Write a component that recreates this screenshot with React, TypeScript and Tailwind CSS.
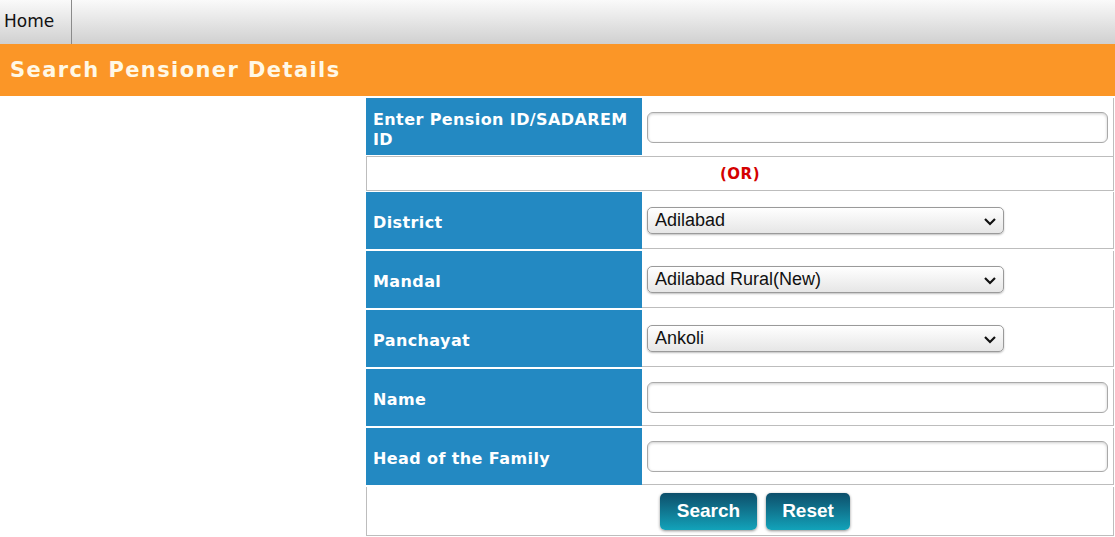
import { useState } from 'react'

const labelCls =
  'w-[276px] shrink-0 bg-[#2389c2] text-white font-bold text-[16px] leading-[20px] tracking-[0.4px] px-[7px] pt-[4px] flex items-center'

function Chevron() {
  return (
    <svg width="14" height="9" viewBox="0 0 14 9" className="absolute right-[6px] top-[9px]">
      <polyline points="2,2 7,7 12,2" fill="none" stroke="#111" strokeWidth="2.2" />
    </svg>
  )
}

function FakeSelect({ value }: { value: string }) {
  return (
    <div className="relative w-[357px] h-[27px] rounded-[5px] border border-[#9a9a9a] bg-gradient-to-b from-[#ffffff] to-[#e6e6e6] shadow-[0_1px_2px_rgba(0,0,0,0.25)] pl-[7px] text-[18px] leading-[25px] text-[#111] font-['Liberation_Sans',Arial,sans-serif]">
      {value}
      <Chevron />
    </div>
  )
}

function TextBox({ value, onChange }: { value: string; onChange: (v: string) => void }) {
  return (
    <input
      type="text"
      value={value}
      onChange={(e) => onChange(e.target.value)}
      className="w-[461px] h-[31px] rounded-[6px] border border-[#a9a9a9] bg-white shadow-[inset_0_1px_3px_rgba(0,0,0,0.2)] px-2 text-[15px] outline-none"
    />
  )
}

function FormRow({ label, children }: { label: string; children: React.ReactNode }) {
  return (
    <div className="flex h-[59px] border-b-2 border-[#ffffff]">
      <div className={labelCls}>{label}</div>
      <div className="flex-1 flex items-center pl-[5px] border-r border-[#bdbdbd] border-b border-b-[#bdbdbd]">
        {children}
      </div>
    </div>
  )
}

export default function App() {
  const [pensionId, setPensionId] = useState('')
  const [name, setName] = useState('')
  const [head, setHead] = useState('')

  return (
    <div className="w-[1115px] h-[537px] bg-white font-['DejaVu_Sans',Verdana,sans-serif] overflow-hidden">
      <div className="h-[44px] bg-gradient-to-b from-[#fafafa] to-[#d0d0d0] flex">
        <div className="w-[72px] border-r border-[#8a8a8a] pl-[4px] pt-[9px] text-[17px] text-[#111]">
          Home
        </div>
      </div>

      <div className="h-[52px] bg-[#fb9627] flex items-center pl-[10px] pt-[2px]">
        <h1 className="text-[21px] font-bold tracking-[1.4px] text-[#fff8e6]">Search Pensioner Details</h1>
      </div>

      <div className="ml-[366px] w-[748px] mt-[2px]">
        <div className="flex h-[59px] border-b border-[#bdbdbd]">
          <div className={labelCls + ' border-b border-white pt-[6px]'}>Enter Pension ID/SADAREM ID</div>
          <div className="flex-1 flex items-center pl-[5px] border-r border-[#bdbdbd]">
            <TextBox value={pensionId} onChange={setPensionId} />
          </div>
        </div>

        <div className="h-[34px] border-l border-r border-b border-[#bdbdbd] flex items-center justify-center text-[#d40000] font-bold text-[15px] tracking-[0.5px] pt-[1px]">
          (OR)
        </div>

        <div className="h-[1px]" />

        <FormRow label="District">
          <FakeSelect value="Adilabad" />
        </FormRow>
        <FormRow label="Mandal">
          <FakeSelect value="Adilabad Rural(New)" />
        </FormRow>
        <FormRow label="Panchayat">
          <FakeSelect value="Ankoli" />
        </FormRow>
        <FormRow label="Name">
          <TextBox value={name} onChange={setName} />
        </FormRow>
        <FormRow label="Head of the Family">
          <TextBox value={head} onChange={setHead} />
        </FormRow>

        <div className="h-[49px] border border-t-0 border-[#bdbdbd] flex items-center pl-[293px] gap-[9px] pt-[1px] font-['Liberation_Sans',Arial,sans-serif]">
          <button
            type="button"
            className="w-[97px] h-[37px] rounded-[5px] bg-gradient-to-b from-[#0d4f6b] to-[#12a3ba] text-white font-bold text-[19px] shadow-[0_1px_3px_rgba(0,0,0,0.45)]"
          >
            Search
          </button>
          <button
            type="button"
            className="w-[84px] h-[37px] rounded-[5px] bg-gradient-to-b from-[#0d4f6b] to-[#12a3ba] text-white font-bold text-[19px] shadow-[0_1px_3px_rgba(0,0,0,0.45)]"
          >
            Reset
          </button>
        </div>
      </div>
    </div>
  )
}
